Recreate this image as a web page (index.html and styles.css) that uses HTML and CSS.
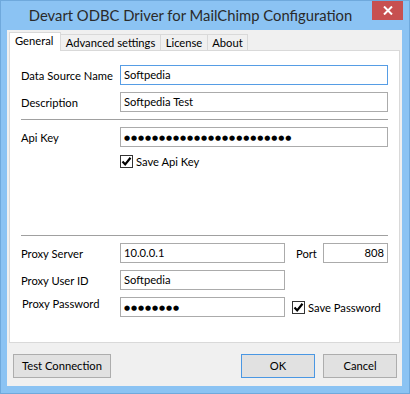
FILE: index.html
```html
<!DOCTYPE html>
<html>
<head>
<meta charset="utf-8">
<link rel="stylesheet" href="styles.css">
</head>
<body>
<div class="window">
  <div class="titlebar">
    <div class="title">Devart ODBC Driver for MailChimp Configuration</div>
    <div class="close">
      <svg width="10" height="9" viewBox="0 0 10 9"><path d="M1 0.5 L9 8.5 M9 0.5 L1 8.5" stroke="#fff" stroke-width="2" fill="none"/></svg>
    </div>
  </div>
  <div class="client">
    <div class="tabs">
      <div class="tab active t-general">General</div>
      <div class="tab t-adv">Advanced settings</div>
      <div class="tab t-lic">License</div>
      <div class="tab t-about">About</div>
    </div>
    <div class="panel">
      <div class="row first">
        <div class="label">Data Source Name</div>
        <div class="field focus">Softpedia</div>
      </div>
      <div class="row">
        <div class="label">Description</div>
        <div class="field">Softpedia Test</div>
      </div>
      <div class="sep"></div>
      <div class="row">
        <div class="label">Api Key</div>
        <div class="field pw"><span class="dots">●●●●●●●●●●●●●●●●●●●●●●●●</span></div>
      </div>
      <div class="checkrow">
        <span class="cb"><svg width="11" height="11" viewBox="0 0 11 11"><path d="M1.5 5.5 L4.2 8.4 L9.5 1.8" stroke="#000" stroke-width="2.2" fill="none"/></svg></span>
        <span class="cblabel">Save Api Key</span>
      </div>
      <div class="sep lower"></div>
      <div class="row">
        <div class="label">Proxy Server</div>
        <div class="field short">10.0.0.1</div>
        <div class="portlabel">Port</div>
        <div class="field port">808</div>
      </div>
      <div class="row">
        <div class="label">Proxy User ID</div>
        <div class="field short">Softpedia</div>
      </div>
      <div class="row">
        <div class="label pwlabel">Proxy Password</div>
        <div class="field short pw"><span class="dots">●●●●●●●●</span></div>
        <span class="cb cb-pw"><svg width="11" height="11" viewBox="0 0 11 11"><path d="M1.5 5.5 L4.2 8.4 L9.5 1.8" stroke="#000" stroke-width="2.2" fill="none"/></svg></span>
        <span class="cblabel">Save Password</span>
      </div>
    </div>
    <div class="footer">
      <div class="btn test">Test Connection</div>
      <div class="btn ok">OK</div>
      <div class="btn cancel">Cancel</div>
    </div>
  </div>
</div>
</body>
</html>
```

FILE: styles.css
```css
html, body {
  margin: 0;
  padding: 0;
}
body {
  width: 410px;
  height: 394px;
  overflow: hidden;
  font-family: "Lato", "Noto Sans", sans-serif;
  font-size: 11.2px;
  color: #000;
  white-space: nowrap;
}
.window {
  width: 410px;
  height: 394px;
  box-sizing: border-box;
  background: #8bc3f3;
  border: 1px solid #6fa9dc;
  display: flex;
  flex-direction: column;
}
.titlebar {
  height: 29px;
  display: flex;
  align-items: flex-start;
}
.title {
  flex: 1;
  text-align: center;
  font-size: 14.8px;
  line-height: 29px;
  color: #2a2a2a;
  padding-left: 8px;
}
.close {
  width: 31px;
  height: 19px;
  margin-right: 6px;
  background: #c75050;
  display: flex;
  align-items: center;
  justify-content: center;
}
.client {
  margin: 0 7px 0 6px;
  height: 356px;
  background: #f0f0f0;
  padding: 2px 2px 0 2px;
  box-sizing: border-box;
  display: flex;
  flex-direction: column;
}
.tabs {
  display: flex;
  align-items: flex-end;
  height: 18px;
}
.tab {
  box-sizing: border-box;
  height: 16px;
  border: 1px solid #d9d9d9;
  border-bottom: none;
  background: #f0f0f0;
  line-height: 15px;
  text-align: center;
  margin-left: -1px;
}
.tab.active {
  height: 19px;
  margin-bottom: -1px;
  margin-left: 0;
  background: #fff;
  position: relative;
  z-index: 1;
  line-height: 16px;
  text-align: left;
  padding-left: 5px;
}
.t-general { width: 52px; }
.t-adv { width: 101px; }
.t-lic { width: 48px; }
.t-about { width: 41px; }
.panel {
  box-sizing: border-box;
  width: 391px;
  height: 293px;
  background: #fff;
  border: 1px solid #d9d9d9;
  padding: 14px 11px 0 11px;
  display: flex;
  flex-direction: column;
}
.row {
  display: flex;
  align-items: center;
  height: 20px;
  margin-top: 7px;
}
.row.first {
  margin-top: 0;
}
.label {
  width: 99px;
  flex: none;
}
.pwlabel {
  padding-left: 1px;
  width: 98px;
  margin-top: -7px;
}
.field {
  box-sizing: border-box;
  height: 20px;
  width: 268px;
  flex: none;
  border: 1px solid #ababab;
  padding-left: 3px;
  line-height: 18px;
  overflow: hidden;
}
.field.focus {
  border-color: #569de5;
}
.field.short {
  width: 165px;
}
.field.port {
  width: 65px;
  margin-left: auto;
  text-align: right;
  padding-right: 3px;
}
.portlabel {
  margin-left: 11px;
}
.dots {
  font-family: "DejaVu Sans", sans-serif;
  font-size: 7px;
  letter-spacing: 0.9px;
  vertical-align: 1px;
}
.sep {
  height: 1px;
  background: #a0a0a0;
  margin: 7px 0 0 0;
  width: 367px;
}
.sep.lower {
  margin-top: 67px;
}
.checkrow {
  display: flex;
  align-items: center;
  margin-top: 8px;
  padding-left: 99px;
  height: 13px;
}
.cb {
  box-sizing: border-box;
  width: 13px;
  height: 13px;
  border: 1px solid #333;
  background: #fff;
  display: flex;
  align-items: center;
  justify-content: center;
  flex: none;
}
.cb-pw {
  margin-left: 7px;
}
.cblabel {
  margin-left: 3px;
}
.footer {
  display: flex;
  margin-top: 11px;
  padding-left: 4px;
}
.btn {
  box-sizing: border-box;
  height: 24px;
  background: #e1e1e1;
  border: 1px solid #adadad;
  text-align: center;
  line-height: 22px;
}
.btn.test {
  width: 98px;
}
.btn.ok {
  width: 74px;
  margin-left: auto;
  border-color: #4a97e3;
}
.btn.cancel {
  width: 74px;
  margin-left: 8px;
  margin-right: 3px;
}
```
